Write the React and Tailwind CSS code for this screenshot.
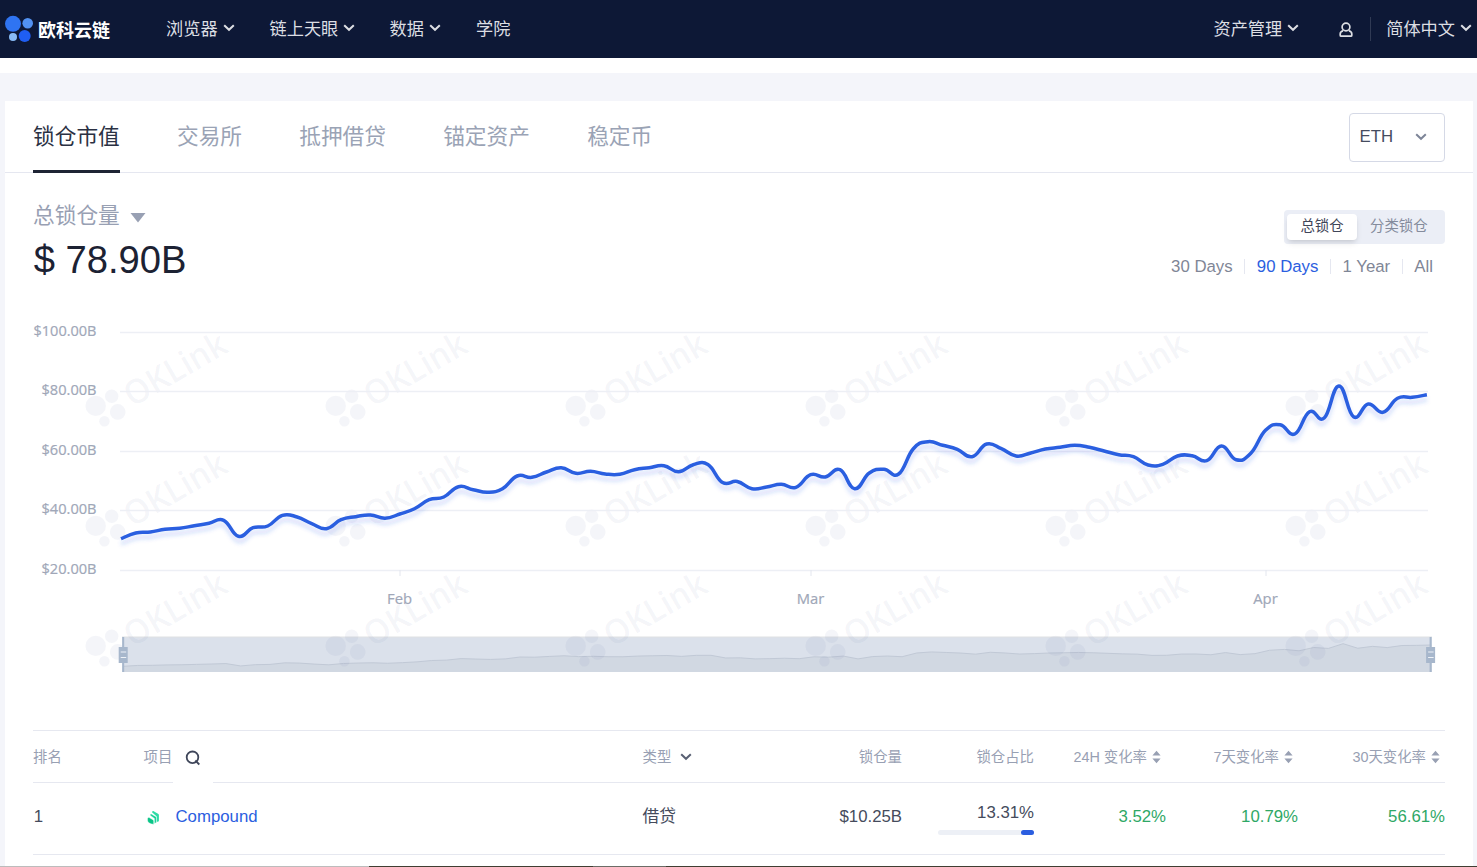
// DeFi locked value page: nav bar, category tabs, chart and ranking table

const FONT = "font-['Liberation_Sans','Noto_Sans_CJK_SC',sans-serif]";

const navItems = [
  { label: '浏览器', menu: true, width: 'w-[103.5px]' },
  { label: '链上天眼', menu: true, width: 'w-[120px]' },
  { label: '数据', menu: true, width: 'w-[86.5px]' },
  { label: '学院', menu: false, width: 'w-[60px]' },
];

const tabs = ['锁仓市值', '交易所', '抵押借贷', '锚定资产', '稳定币'];
const periods = ['30 Days', '90 Days', '1 Year', 'All'];

// Chart geometry
const CHART_W = 1468;
const CHART_H = 380;
const FIRST_X = 116;
const STEP_X = 14.673;
const gridLines = [
  { y: 32, label: '$100.00B' },
  { y: 91, label: '$80.00B' },
  { y: 151, label: '$60.00B' },
  { y: 210, label: '$40.00B' },
  { y: 270, label: '$20.00B' },
];
const months = [
  { x: 395, label: 'Feb' },
  { x: 806, label: 'Mar' },
  { x: 1261, label: 'Apr' },
];

// One y coordinate per day, 90 days
const daily = [
  238.7, 233, 232, 229.3, 228.3, 225.7, 223.3, 220.3, 236.3, 227.7,
  226, 215.3, 217, 223.7, 228.7, 219.7, 216.7, 215, 218.3, 214,
  208.7, 199.7, 197, 186.7, 189.7, 192.3, 188.7, 176, 177.3, 172,
  167.7, 173.3, 171.3, 174, 174.3, 169.7, 167.7, 165.7, 171.7, 164.7,
  164.5, 182.5, 181.5, 188.7, 187, 184.3, 187.3, 174.7, 177, 169.7,
  188.7, 173, 169.3, 174, 148.7, 141.7, 145.3, 149.3, 156.7, 144,
  148.7, 156, 153, 149, 147.3, 145.3, 147.3, 151, 154.7, 156.7,
  165, 164.3, 156, 155.7, 160.7, 146, 159.7, 153.3, 130.3, 124.7,
  134, 111.7, 118, 86, 116.7, 104, 112.3, 98.3, 97.3, 94.7,
];

const points = daily.map((y, i) => [FIRST_X + i * STEP_X, y]);

// Cardinal spline as cubic beziers, a little rounder than Catmull-Rom
const TENSION = 4.5;

function smoothPath(pts) {
  const last = pts.length - 1;
  let d = `M${pts[0][0]} ${pts[0][1]}`;
  for (let i = 0; i < last; i++) {
    const p0 = pts[Math.max(i - 1, 0)];
    const p1 = pts[i];
    const p2 = pts[i + 1];
    const p3 = pts[Math.min(i + 2, last)];
    const a = [p1[0] + (p2[0] - p0[0]) / TENSION, p1[1] + (p2[1] - p0[1]) / TENSION];
    const b = [p2[0] - (p3[0] - p1[0]) / TENSION, p2[1] - (p3[1] - p1[1]) / TENSION];
    d += `C${a[0]} ${a[1]} ${b[0]} ${b[1]} ${p2[0]} ${p2[1]}`;
  }
  return d;
}

const linePath = smoothPath(points);
const miniLine = daily
  .map((y, i) => `${118 + i * 14.7},${366.3 - (238.7 - y) * 0.148}`)
  .join(' ');

function Chevron({ className }) {
  return (
    <svg className={className} width="12" height="8" viewBox="0 0 12 8" fill="none" stroke="currentColor" strokeWidth="2">
      <path d="M1.2 1.2 6 5.8l4.8-4.6" />
    </svg>
  );
}

function SortIcon() {
  return (
    <svg className="ml-[5px]" width="9" height="14" viewBox="0 0 9 14" fill="#98a0b3">
      <path d="M4.5 0.7 8.6 5.6H0.4zM4.5 13.3 8.6 8.4H0.4z" />
    </svg>
  );
}

function Header() {
  return (
    <header className="flex h-[58px] items-center bg-[#0d1836] text-[17.2px] text-[#dcdee3]">
      <div className="flex w-[166px] items-center">
        <svg className="ml-1" width="30" height="30" viewBox="4 15 30 30">
          <circle cx="13" cy="24.8" r="8" fill="#2f74f2" />
          <circle cx="27.7" cy="24.3" r="5.3" fill="#5292f2" />
          <circle cx="13" cy="38" r="4" fill="#88bbf6" />
          <circle cx="24.7" cy="37" r="6" fill="#1f5ef3" />
        </svg>
        <span className="ml-1 pt-[3px] text-[18px] font-bold leading-none text-white">欧科云链</span>
      </div>
      <nav className="flex flex-1 items-center pt-[2px]">
        {navItems.map((item) => (
          <a key={item.label} className={`flex items-center whitespace-nowrap ${item.width}`}>
            {item.label}
            {item.menu && <Chevron className="-mt-1 ml-[5px]" />}
          </a>
        ))}
      </nav>
      <div className="flex items-center whitespace-nowrap pt-[2px]">
        <span>资产管理</span>
        <Chevron className="-mt-1 ml-[5px]" />
        <svg className="ml-10" width="14" height="16" viewBox="0 0 14 16" fill="none" stroke="currentColor" strokeWidth="1.7">
          <circle cx="7" cy="5" r="3.9" />
          <path d="M4.200 8.900H4C2.300 9.300 1.200 10.500 1.200 12v1.200c0 .7.300 1 1 1h9.600c.7 0 1-.3 1-1V12c0-1.500-1.100-2.700-2.800-3.100h-.2" />
        </svg>
        <span className="-mt-[2px] ml-[17px] h-6 w-px bg-[#303a54]" />
        <span className="ml-[15px]">简体中文</span>
        <Chevron className="-mt-1 ml-[5px] mr-[5px]" />
      </div>
    </header>
  );
}

function TabBar() {
  return (
    <div className="flex h-[72px] items-stretch justify-between border-b border-[#e5e7f0] pl-7 pr-7">
      <div className="flex gap-[57.2px] text-[21.7px]">
        {tabs.map((tab, i) => (
          <button
            key={tab}
            className={`-mb-px flex items-center whitespace-nowrap border-b-[3px] pt-1 ${
              i === 0 ? 'border-[#1e2434] text-[#2b3143]' : 'border-transparent text-[#9aa3b5]'
            }`}
          >
            {tab}
          </button>
        ))}
      </div>
      <div className="mt-3 flex h-[49px] w-24 items-center justify-between rounded-sm border border-[#d5d9e6] pb-px pl-[9.500px] pr-[17px] text-[16.8px] text-[#454c5f]">
        ETH
        <Chevron className="text-[#7d8598]" />
      </div>
    </div>
  );
}

function Summary() {
  return (
    <div className="flex h-[127px] justify-between px-7">
      <div>
        <div className="mt-[27px] flex h-8 items-center text-[21.7px] text-[#98a0b3]">
          总锁仓量
          <svg className="ml-[10px] mt-[3px]" width="16" height="10" viewBox="0 0 16 10" fill="currentColor">
            <path d="M0.500 0h15L8 9.500z" />
          </svg>
        </div>
        <div className="ml-[0.700px] mt-1 text-[38.2px] leading-[48px] text-[#1c2233]">$ 78.90B</div>
      </div>
      <div className="mt-[37px] flex flex-col items-end">
        <div className="flex h-[34px] w-[161px] items-center rounded bg-[#ebeef6] pl-[3px] text-[14.4px]">
          <span className="flex h-[26px] w-[70px] items-center justify-center rounded-sm bg-white text-[#3f4659] shadow-md">总锁仓</span>
          <span className="ml-[13px] text-[#848b9c]">分类锁仓</span>
        </div>
        <div className="mt-[10px] flex items-center pr-3 text-[16.8px] text-[#7f8696]">
          {periods.map((period, i) => (
            <div key={period} className="flex items-center whitespace-nowrap">
              {i > 0 && <span className="mx-[11.600px] h-[15px] w-px bg-[#e5e7f0]" />}
              <span className={period === '90 Days' ? 'text-[#2b5ee0]' : ''}>{period}</span>
            </div>
          ))}
        </div>
      </div>
    </div>
  );
}

function Watermark({ x, y }) {
  return (
    <g transform={`translate(${x} ${y})`}>
      <circle cx="0" cy="0" r="10.2" />
      <circle cx="16" cy="-9.700" r="6.700" />
      <circle cx="22" cy="6" r="7.800" />
      <circle cx="8.700" cy="15.300" r="5.200" />
      <text
        transform="translate(36.500 1.800) rotate(-30)"
        fontSize="34"
        fontWeight="600"
        textLength="113"
        lengthAdjust="spacingAndGlyphs"
        className="font-['Open_Sans',sans-serif]"
      >
        OKLink
      </text>
    </g>
  );
}

function Handle({ x }) {
  return (
    <g>
      <path d={`M${x} 337v35`} stroke="#a7b7cc" strokeWidth="2" />
      <rect x={x - 4.500} y="347" width="9" height="16" fill="#a7b7cc" />
      <path d={`M${x - 2.500} 352h5.500M${x - 2.500} 357.500h5.500`} stroke="#eef2f7" strokeWidth="1.200" />
    </g>
  );
}

function Chart() {
  return (
    <svg className="block shrink-0" width={CHART_W} height={CHART_H} viewBox={`0 0 ${CHART_W} ${CHART_H}`} fill="none">
      <defs>
        <filter id="line-shadow" x="-5%" y="-20%" width="110%" height="150%">
          <feDropShadow dx="0" dy="5" stdDeviation="2.200" floodColor="#2b4ee8" floodOpacity="0.200" />
        </filter>
        <linearGradient id="area-fade" gradientUnits="userSpaceOnUse" x1="0" y1="86" x2="0" y2="170">
          <stop offset="0" stopColor="#fff" />
          <stop offset="0.500" stopColor="#fff" stopOpacity="0.900" />
          <stop offset="1" stopColor="#fff" stopOpacity="0" />
        </linearGradient>
      </defs>

      {/* Range slider */}
      <rect x="117" y="337" width="1310" height="35" fill="#dbe1eb" />
      <path d="M117 337h1310" stroke="#dfe1e3" />
      <polygon points={`118,372 ${miniLine} 1427,372`} fill="#d1d8e2" />
      <polyline points={miniLine} stroke="#c1c9d6" strokeWidth="1" />

      <g fill="#6478a8" fillOpacity="0.070">
        {[0, 1, 2].map((row) =>
          [0, 1, 2, 3, 4, 5].map((col) => (
            <Watermark key={`${row}-${col}`} x={90.700 + col * 240} y={105.900 + row * 120} />
          ))
        )}
      </g>
      <path d={`${linePath}V270H${FIRST_X}Z`} fill="url(#area-fade)" />

      {gridLines.map((line) => (
        <g key={line.label}>
          <path d={`M115 ${line.y + 0.500}H1423`} stroke="#edeff5" strokeWidth="1.400" />
          <text
            x="91.500"
            y={line.y + 3.500}
            textAnchor="end"
            fontSize="14.400"
            textLength={line.y === 32 ? 63 : 55}
            lengthAdjust="spacingAndGlyphs"
            fill="#a0a7b8"
            stroke="#a0a7b8"
            strokeWidth="0.200"
            className="font-['Open_Sans',sans-serif]"
          >
            {line.label}
          </text>
        </g>
      ))}
      {months.map((month) => (
        <g key={month.label}>
          <path d={`M${month.x} 270v6`} stroke="#e3e6ee" />
          <text
            x={month.x - 0.500}
            y="304"
            textAnchor="middle"
            fontSize="14.800"
            fill="#a0a7b8"
            stroke="#a0a7b8"
            strokeWidth="0.200"
            className="font-['Open_Sans',sans-serif]"
          >
            {month.label}
          </text>
        </g>
      ))}
      <path d={linePath} stroke="#2b5ee0" strokeWidth="3.500" filter="url(#line-shadow)" />
      <Handle x={118.200} />
      <Handle x={1425.600} />
    </svg>
  );
}

function RankTable() {
  return (
    <div className="mx-7 mt-[50px] w-[1412px] shrink-0 border-t border-[#e6e8f0]">
      <div className="grid h-[51px] grid-cols-[110px_499px_130px_130px_132px_132px_132px_147px] items-center pt-[2px] text-[14.4px] text-[#98a0b3]">
        <span>排名</span>
        <span className="flex items-center pl-[0.500px]">
          项目
          <svg className="ml-[13px] mt-[2px]" width="16" height="16" viewBox="0 0 16 16" fill="none" stroke="#3f465a" strokeWidth="1.8">
            <circle cx="7.500" cy="7.300" r="5.800" />
            <path d="m10.300 10.500 4 4" />
          </svg>
        </span>
        <span className="flex items-center pl-[0.500px]">
          类型
          <Chevron className="ml-[8.500px] text-[#596073]" />
        </span>
        <span className="text-right">锁仓量</span>
        <span className="text-right">锁仓占比</span>
        <span className="flex items-center justify-end whitespace-nowrap pr-[5px]">24H 变化率<SortIcon /></span>
        <span className="flex items-center justify-end whitespace-nowrap pr-[5px]">7天变化率<SortIcon /></span>
        <span className="flex items-center justify-end whitespace-nowrap pr-[5px]">30天变化率<SortIcon /></span>
      </div>
      <div className="flex h-px justify-between">
        <span className="w-[140px] bg-[#e6e8f0]" />
        <span className="w-[1232px] bg-[#e6e8f0]" />
      </div>
      <div className="grid h-[72px] grid-cols-[110px_499px_130px_130px_132px_132px_132px_147px] items-center border-b border-[#e6e8f0] pb-1 text-[16.8px] text-[#454b5c]">
        <span className="pl-[0.700px]">1</span>
        <span className="flex items-center text-[#2b5ee0]">
          <svg className="ml-1 mt-[2px]" width="14" height="15" viewBox="0 0 14 15">
            <path d="M5 2.200c.2-1 .9-1.500 1.700-1l4.300 2.500c.6.300.9.800.9 1.400v6.200l-2.200.8V6.500z" fill="#2fdca6" />
            <path d="M3 5.200c.2-1 .9-1.500 1.700-1l3.800 2.200c.6.300.9.800.9 1.400v4.700l-2 .9V8.400z" fill="#14d097" stroke="#fff" strokeWidth="0.400" />
            <path d="M0.600 8.600c.1-1.100.8-1.400 1.600-1l3.600 2.100c.6.300.9.800.9 1.400v3.100c-2.300.1-4.700-1.100-5.600-2.200-.5-.6-.600-1.900-.5-3.400z" fill="#09c587" stroke="#fff" strokeWidth="0.400" />
          </svg>
          <span className="ml-[14.500px]">Compound</span>
        </span>
        <span className="pl-[0.500px]">借贷</span>
        <span className="text-right">$10.25B</span>
        <div className="flex flex-col items-end">
          <span className="pt-[2px] leading-6">13.31%</span>
          <span className="mt-[5px] flex h-[5px] w-24 justify-end rounded-full bg-[#edf0f6]">
            <span className="w-[13px] rounded-full bg-[#2b5ee0]" />
          </span>
        </div>
        <span className="text-right text-[#2fa866]">3.52%</span>
        <span className="text-right text-[#2fa866]">10.79%</span>
        <span className="text-right text-[#2fa866]">56.61%</span>
      </div>
    </div>
  );
}

export default function App() {
  return (
    <div className={`flex h-[867px] w-[1477px] flex-col overflow-hidden bg-[#f4f5fa] ${FONT}`}>
      <Header />
      <div className="h-[15px] shrink-0 bg-white" />
      <main className="ml-[5px] mt-7 flex w-[1468px] flex-1 flex-col bg-white">
        <TabBar />
        <Summary />
        <Chart />
        <RankTable />
      </main>
      <div className="flex h-px shrink-0 bg-[#403e32]">
        <span className="w-[369px] bg-[#bcbcbc]" />
        <span className="ml-56 w-[73px] bg-[#6b6c66]" />
      </div>
    </div>
  );
}
